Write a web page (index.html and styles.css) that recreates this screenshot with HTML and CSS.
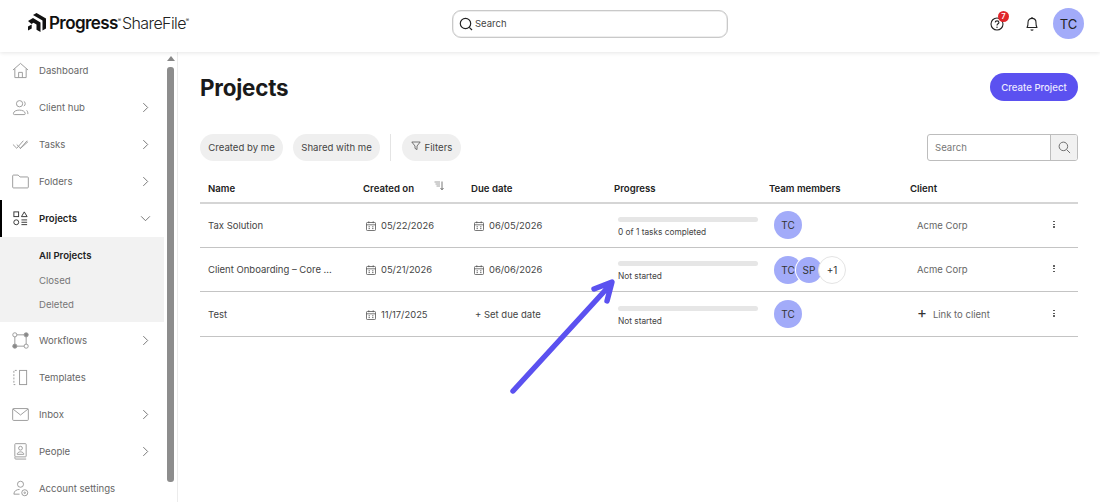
FILE: index.html
```html
<!DOCTYPE html>
<html lang="en">
<head>
<meta charset="utf-8">
<title>Projects</title>
<link rel="stylesheet" href="styles.css">
</head>
<body>
<header class="topbar">
  <div class="logo">
    <svg class="logo-mark" viewBox="0 0 18 19" width="18" height="19"><path d="M5 2 L8.5 0 L18 5.5 V15.5 L14.5 17.5 V7.5 Z M0 8 L5 5 L12.5 9.5 V19 L8.5 16.7 V11.5 L5.5 9.7 L3.5 10.9 Z M0 13.5 L3.7 11.5 V15.5 L0 17.5 Z" fill="#111"/></svg>
    <span class="logo-a">Progress</span><sup class="logo-r">®</sup><span class="logo-b">ShareFile</span><sup class="logo-r">®</sup>
  </div>
  <div class="top-search">
    <svg viewBox="0 0 14 14" width="14" height="14"><circle cx="6.5" cy="6.5" r="5.2" fill="none" stroke="#222" stroke-width="1.2"/><path d="M10.3 10.3 L13 13" stroke="#222" stroke-width="1.2"/></svg>
    <span>Search</span>
  </div>
  <div class="top-actions">
    <div class="help">
      <svg viewBox="0 0 14 14" width="14" height="14"><circle cx="7" cy="7" r="6" fill="none" stroke="#222" stroke-width="1.1"/><path d="M5.2 5.4 C5.3 3.4 8.9 3.4 8.9 5.4 C8.9 6.8 7 6.8 7 8.4" fill="none" stroke="#222" stroke-width="1.1"/><circle cx="7" cy="10.3" r=".7" fill="#222"/></svg>
      <span class="badge">7</span>
    </div>
    <svg class="bell" viewBox="0 0 14 16" width="14" height="16"><path d="M2 11.5 C3.2 10 3 8 3 6.5 C3 4 4.8 2.4 7 2.4 C9.2 2.4 11 4 11 6.5 C11 8 10.8 10 12 11.5 Z" fill="none" stroke="#222" stroke-width="1.1" stroke-linejoin="round"/><path d="M5.8 13.5 C6.2 14.4 7.8 14.4 8.2 13.5 M7 1 V2.4" fill="none" stroke="#222" stroke-width="1.1"/></svg>
    <div class="avatar avatar-lg">TC</div>
  </div>
</header>

<div class="body-wrap">
  <aside class="sidebar">
    <nav class="nav">
      <a class="nav-item"><svg class="ico" viewBox="0 0 18 18"><path d="M1 8.5 L9 1.5 L17 8.5 M3 7 V16.5 H15 V7 M7 16.5 V11 H11 V16.5" /></svg><span>Dashboard</span></a>
      <a class="nav-item"><svg class="ico" viewBox="0 0 18 18"><circle cx="8" cy="5" r="3.3"/><path d="M1.5 15.5 C1.5 10.5 14 10.5 14 15.5 Q14 16.5 13 16.5 H2.5 Q1.5 16.5 1.5 15.5 Z M12.5 2.5 C14.5 3 14.5 7 12.5 7.5 M15.5 12 C16.5 13 16.8 14 16.8 16"/></svg><span>Client hub</span><svg class="chev" viewBox="0 0 8 12"><path d="M1.5 1 L6.5 6 L1.5 11"/></svg></a>
      <a class="nav-item"><svg class="ico" viewBox="0 0 18 18"><path d="M1 9 L5 13 L12 5 M5 9 L9 13 L16 5 M8.5 13.5 L17 6"/></svg><span>Tasks</span><svg class="chev" viewBox="0 0 8 12"><path d="M1.5 1 L6.5 6 L1.5 11"/></svg></a>
      <a class="nav-item"><svg class="ico ico-wide" viewBox="0 0 18 15"><path d="M.7 1.6 Q.7 .7 1.6 .7 H6.5 L8.5 2.7 H16.4 Q17.3 2.7 17.3 3.6 V13.4 Q17.3 14.3 16.4 14.3 H1.6 Q.7 14.3 .7 13.4 Z"/></svg><span>Folders</span><svg class="chev" viewBox="0 0 8 12"><path d="M1.5 1 L6.5 6 L1.5 11"/></svg></a>
      <a class="nav-item active"><svg class="ico ico-dark" viewBox="0 0 18 18"><rect x="2" y="2" width="5" height="5"/><path d="M13 2 L16 7 H10 Z"/><circle cx="4.5" cy="13" r="2.6"/><path d="M10 10.5 H16 M10 13 H16 M10 15.5 H16"/></svg><span>Projects</span><svg class="chev chev-down" viewBox="0 0 12 8"><path d="M1 1.5 L6 6.5 L11 1.5"/></svg></a>
      <div class="subnav">
        <a class="sub-item current">All Projects</a>
        <a class="sub-item">Closed</a>
        <a class="sub-item">Deleted</a>
      </div>
      <a class="nav-item"><svg class="ico" viewBox="0 0 18 18"><path d="M5 3 H13 M5 15 H13 M3 5 V13 M15 5 V13"/><circle cx="3" cy="3" r="2.2"/><circle cx="15" cy="3" r="2.2" class="solid"/><circle cx="3" cy="15" r="2.2" class="solid"/><circle cx="15" cy="15" r="2.2"/></svg><span>Workflows</span><svg class="chev" viewBox="0 0 8 12"><path d="M1.5 1 L6.5 6 L1.5 11"/></svg></a>
      <a class="nav-item"><svg class="ico" viewBox="0 0 18 18"><rect x="8" y="1.5" width="7.5" height="15" /><path d="M5 1.5 H2 V16.5 H5" stroke-dasharray="2 1.5"/></svg><span>Templates</span></a>
      <a class="nav-item"><svg class="ico ico-wide" viewBox="0 0 18 14"><rect x=".7" y=".7" width="16.6" height="12.6" rx="1"/><path d="M1 1.2 L9 7.5 L17 1.2"/></svg><span>Inbox</span><svg class="chev" viewBox="0 0 8 12"><path d="M1.5 1 L6.5 6 L1.5 11"/></svg></a>
      <a class="nav-item"><svg class="ico" viewBox="0 0 18 18"><rect x="3" y=".7" width="12" height="14" rx=".8"/><circle cx="9" cy="5.5" r="2"/><path d="M5.5 12 C5.5 8.5 12.5 8.5 12.5 12 Z M3 15 V16 Q3 17 4 17 H15"/></svg><span>People</span><svg class="chev" viewBox="0 0 8 12"><path d="M1.5 1 L6.5 6 L1.5 11"/></svg></a>
      <a class="nav-item"><svg class="ico" viewBox="0 0 18 18"><circle cx="9" cy="4.5" r="3.2"/><path d="M2 15 C2 11.5 5 10 8 10 M2 15 H8"/><circle cx="13.5" cy="13.5" r="3.2"/><circle cx="13.5" cy="13.5" r=".8"/></svg><span>Account settings</span></a>
    </nav>
    <div class="scrollbar">
      <div class="scroll-up"></div>
      <div class="scroll-thumb"></div>
    </div>
  </aside>

  <main class="main">
    <div class="title-row">
      <h1>Projects</h1>
      <button class="primary">Create Project</button>
    </div>
    <div class="filter-row">
      <button class="chip chip-a">Created by me</button>
      <button class="chip chip-b">Shared with me</button>
      <span class="divider"></span>
      <button class="chip chip-c"><svg viewBox="0 0 10 10" width="10" height="10"><path d="M.8 1 H9.2 L6 5 V8.6 L4 7.4 V5 Z" fill="none" stroke="#555" stroke-width=".8"/></svg>Filters</button>
      <div class="table-search">
        <span class="ts-input">Search</span>
        <span class="ts-btn"><svg viewBox="0 0 14 14" width="13" height="13"><circle cx="5.8" cy="5.8" r="4.6" fill="none" stroke="#666" stroke-width="1"/><path d="M9.2 9.2 L13 13" stroke="#666" stroke-width="1"/></svg></span>
      </div>
    </div>
    <table class="grid">
      <colgroup>
        <col class="c-name"><col class="c-created"><col class="c-due"><col class="c-prog"><col class="c-team"><col class="c-client"><col class="c-more">
      </colgroup>
      <thead>
        <tr>
          <th>Name</th>
          <th><div class="th-sort">Created on<svg viewBox="0 0 10 10" width="10" height="10"><path d="M.5 1 H6 M1.5 3 H6 M2.5 5 H6" stroke="#888" stroke-width=".8"/><path d="M8 .5 V8.5 M6.5 7 L8 8.8 L9.5 7" fill="none" stroke="#555" stroke-width=".8"/></svg></div></th>
          <th>Due date</th>
          <th>Progress</th>
          <th>Team members</th>
          <th>Client</th>
          <th></th>
        </tr>
      </thead>
      <tbody>
        <tr>
          <td>Tax Solution</td>
          <td><span class="date"><svg class="cal" viewBox="0 0 10 10"><rect x=".5" y="1.5" width="9" height="8" rx=".8"/><path d="M.5 3.8 H9.5 M2.8 .3 V2.2 M7.2 .3 V2.2 M2.5 5.8 H4 M6 5.8 H7.5 M2.5 7.6 H4 M6 7.6 H7.5"/></svg>05/22/2026</span></td>
          <td><span class="date"><svg class="cal" viewBox="0 0 10 10"><rect x=".5" y="1.5" width="9" height="8" rx=".8"/><path d="M.5 3.8 H9.5 M2.8 .3 V2.2 M7.2 .3 V2.2 M2.5 5.8 H4 M6 5.8 H7.5 M2.5 7.6 H4 M6 7.6 H7.5"/></svg>06/05/2026</span></td>
          <td><div class="bar"></div><div class="bar-label">0 of 1 tasks completed</div></td>
          <td><div class="team"><span class="avatar">TC</span></div></td>
          <td class="client">Acme Corp</td>
          <td><span class="kebab"><i></i><i></i><i></i></span></td>
        </tr>
        <tr>
          <td>Client Onboarding – Core ...</td>
          <td><span class="date"><svg class="cal" viewBox="0 0 10 10"><rect x=".5" y="1.5" width="9" height="8" rx=".8"/><path d="M.5 3.8 H9.5 M2.8 .3 V2.2 M7.2 .3 V2.2 M2.5 5.8 H4 M6 5.8 H7.5 M2.5 7.6 H4 M6 7.6 H7.5"/></svg>05/21/2026</span></td>
          <td><span class="date"><svg class="cal" viewBox="0 0 10 10"><rect x=".5" y="1.5" width="9" height="8" rx=".8"/><path d="M.5 3.8 H9.5 M2.8 .3 V2.2 M7.2 .3 V2.2 M2.5 5.8 H4 M6 5.8 H7.5 M2.5 7.6 H4 M6 7.6 H7.5"/></svg>06/06/2026</span></td>
          <td><div class="bar"></div><div class="bar-label">Not started</div></td>
          <td><div class="team"><span class="avatar">TC</span><span class="avatar overlap">SP</span><span class="avatar more">+1</span></div></td>
          <td class="client">Acme Corp</td>
          <td><span class="kebab"><i></i><i></i><i></i></span></td>
        </tr>
        <tr>
          <td>Test</td>
          <td><span class="date"><svg class="cal" viewBox="0 0 10 10"><rect x=".5" y="1.5" width="9" height="8" rx=".8"/><path d="M.5 3.8 H9.5 M2.8 .3 V2.2 M7.2 .3 V2.2 M2.5 5.8 H4 M6 5.8 H7.5 M2.5 7.6 H4 M6 7.6 H7.5"/></svg>11/17/2025</span></td>
          <td><span class="set-due">+ Set due date</span></td>
          <td><div class="bar"></div><div class="bar-label">Not started</div></td>
          <td><div class="team"><span class="avatar">TC</span></div></td>
          <td class="client"><span class="link-client"><b>+</b>Link to client</span></td>
          <td><span class="kebab"><i></i><i></i><i></i></span></td>
        </tr>
      </tbody>
    </table>
    <svg class="arrow" viewBox="0 0 110 118" width="110" height="118"><path d="M5 113 L103 6 M86 11 L104 4 L99 23" fill="none" stroke="#5b51f0" stroke-width="5.4" stroke-linecap="round" stroke-linejoin="round"/></svg>
  </main>
</div>
</body>
</html>
```
FILE: styles.css
```css
* { box-sizing: border-box; }
html, body { margin: 0; padding: 0; height: 100%; overflow: hidden; }
body { font-family: Inter, "Liberation Sans", sans-serif; font-size: 10px; color: #333; background: #fff; }

.topbar { height: 52px; display: flex; align-items: center; position: relative; background: #fff; box-shadow: 0 1px 4px rgba(0,0,0,.1); z-index: 2; padding: 0 16px 5px 28px; }
.logo { width: 424px; display: flex; align-items: center; color: #111; padding-bottom: 2px; }
.logo-mark { margin-right: 3px; }
.logo-a { font-size: 17px; font-weight: 600; letter-spacing: -.6px; }
.logo-b { font-size: 16px; font-weight: 300; letter-spacing: -.6px; color: #222; }
.logo-r { font-size: 5px; align-self: flex-start; margin: 4px 1px 0 0; }
.top-search { width: 276px; height: 28px; border: 1px solid #c9c9c9; border-radius: 9px; box-shadow: inset 0 0 0 .5px #ddd; display: flex; align-items: center; gap: 2px; padding-left: 6px; font-size: 9.5px; color: #444; }
.top-actions { margin-left: auto; display: flex; align-items: center; }
.help { position: relative; width: 14px; height: 14px; margin-right: 21px; }
.help svg { display: block; }
.badge { position: absolute; left: 8px; top: -6px; width: 11px; height: 11px; border-radius: 50%; background: #e0262b; color: #fff; font-size: 7.5px; font-weight: 600; text-align: center; line-height: 11px; }
.bell { margin-right: 14px; }

.avatar { width: 28px; height: 28px; border-radius: 50%; background: #a2abf9; color: #333; display: inline-flex; align-items: center; justify-content: center; font-size: 10px; }
.avatar-lg { width: 31px; height: 31px; font-size: 13px; color: #222; }

.body-wrap { display: flex; height: 450px; }
.sidebar { width: 178px; flex: none; display: flex; border-right: 1px solid #ececec; overflow: hidden; }
.nav { width: 164px; flex: none; }
.nav-item { height: 37px; display: flex; align-items: center; color: #666; padding: 0 14px 0 12px; font-size: 9.6px; position: relative; }
.nav-item span { margin-left: 10px; }
.nav-item.active { color: #222; font-weight: 600; box-shadow: inset 2px 0 0 #000; }
.ico { width: 17px; height: 17px; fill: none; stroke: #999; stroke-width: 1; flex: none; }
.ico-wide { height: 15px; }
.ico-dark { stroke: #333; }
.ico .solid { fill: #888; }
.chev { width: 7px; height: 11px; margin-left: auto; fill: none; stroke: #666; stroke-width: 1; margin-right: 1px; }
.chev-down { width: 11px; height: 7px; margin-right: -1px; }
.subnav { background: #f2f2f2; padding: 7px 0 4px; height: 85px; }
.sub-item { display: block; padding-left: 39px; height: 24.6px; line-height: 24px; font-size: 9.6px; color: #777; }
.sub-item.current { color: #222; font-weight: 600; }
.scrollbar { flex: none; width: 8px; margin-left: 3px; padding-top: 4px; }
.scroll-up { width: 0; height: 0; border-left: 4px solid transparent; border-right: 4px solid transparent; border-bottom: 5px solid #888; }
.scroll-thumb { width: 7px; height: 415px; margin-top: 6px; border-radius: 3px; background: #8d8d8d; }

.main { flex: 1; position: relative; padding: 21px 22px 0; }
.title-row { display: flex; justify-content: space-between; align-items: center; height: 28px; }
h1 { margin: 0; font-size: 22.4px; font-weight: 700; color: #1a1a1a; letter-spacing: -.2px; }
.primary { width: 88px; height: 28px; border: 0; border-radius: 14px; background: #5b51f0; color: #ece9ff; font: 500 9.6px Inter, "Liberation Sans", sans-serif; padding: 0; }

.filter-row { display: flex; align-items: center; margin-top: 33px; height: 27px; }
.chip { height: 27px; border: 0; border-radius: 14px; background: #efefef; color: #444; font: 400 9.6px Inter, "Liberation Sans", sans-serif; padding: 0; display: inline-flex; align-items: center; justify-content: center; gap: 4px; }
.chip-a { width: 83px; }
.chip-b { width: 87px; margin-left: 10px; }
.chip-c { width: 59px; }
.chip-c svg { margin-top: -3px; }
.divider { width: 1px; height: 27px; background: #e4e4e4; margin: 0 11px 0 10px; }
.table-search { margin-left: auto; width: 151px; height: 27px; border: 1px solid #bdbdbd; border-radius: 3px; display: flex; font-size: 9.6px; color: #777; }
.ts-input { flex: 1; padding-left: 7px; line-height: 25px; }
.ts-btn { width: 27px; background: #f1f1f1; border-left: 1px solid #bdbdbd; display: flex; align-items: center; justify-content: center; border-radius: 0 2px 2px 0; }

.grid { width: 878px; margin-top: 12px; border-collapse: collapse; table-layout: fixed; }
.c-name { width: 155px; }
.c-created { width: 108px; }
.c-due { width: 143px; }
.c-prog { width: 155px; }
.c-team { width: 141px; }
.c-client { width: 138px; }
.grid th { height: 30px; padding: 2px 0 0 8px; text-align: left; font-size: 9.6px; font-weight: 600; color: #222; border-bottom: 2px solid #d5d5d5; }
.grid td { height: 44.4px; padding: 0 0 0 8px; font-size: 9.5px; color: #444; border-bottom: 1px solid #c4c4c4; }
.grid tr:last-child td { padding-top: 1px; }
.th-sort { display: flex; align-items: center; }
.th-sort svg { margin: -5px 0 0 20px; }
.date { display: inline-flex; align-items: center; gap: 5px; padding: 2px 0 0 3px; font-size: 9.4px; }
.cal { width: 10px; height: 10px; fill: none; stroke: #555; stroke-width: .8; }
.set-due { padding-left: 4px; }
.bar { width: 140px; height: 5px; border-radius: 3px; background: #e6e6e6; margin: 3px 0 5px 4px; }
.bar-label { font-size: 8.3px; color: #444; margin: 1px 0 0 4px; }
.team { display: flex; align-items: center; padding-left: 5px; }
.overlap { margin-left: -6px; box-shadow: 0 0 0 1px #fff; width: 26px; height: 26px; }
.more { background: #fff; border: 1px solid #e4e4e4; margin-left: -4px; position: relative; color: #333; }
.client { color: #666 !important; padding-left: 15px !important; }
.link-client { display: inline-flex; align-items: center; }
.link-client b { font-weight: 400; font-size: 15px; color: #333; margin-right: 6px; line-height: 10px; margin-top: -2px; }
.kebab { display: flex; flex-direction: column; gap: 1.2px; width: 2px; margin-left: 5px; margin-top: -2px; }
.kebab i { display: block; width: 1.6px; height: 1.6px; background: #444; border-radius: 50%; }
.arrow { position: absolute; left: 330px; top: 226px; }
```
